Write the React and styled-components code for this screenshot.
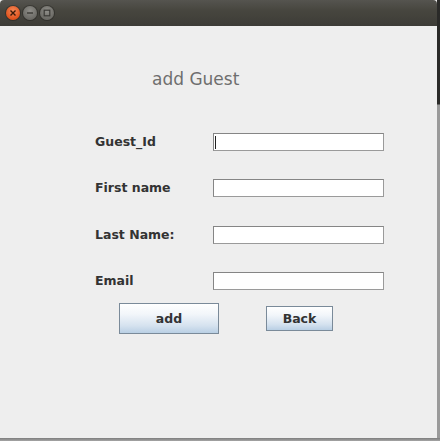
import React from "react";
import styled, { createGlobalStyle } from "styled-components";

const Global = createGlobalStyle`
  html, body { margin: 0; padding: 0; background: #8c8c8c; }
  body { width: 440px; height: 441px; overflow: hidden; font-family: "DejaVu Sans", sans-serif; }
`;

const Screen = styled.div`
  display: flex;
  flex-direction: column;
  width: 440px;
  height: 441px;
`;

const Top = styled.div`
  display: flex;
  height: 438px;
`;

const Edge = styled.div`
  width: 3px;
  background: linear-gradient(to bottom, #2a2a28 0, #2a2a28 104px, #9a9a9a 105px, #9a9a9a 100%);
`;

const Bottom = styled.div`
  height: 3px;
  background: linear-gradient(to bottom, #7d7d7d, #a5a5a5);
`;

const Window = styled.div`
  width: 437px;
  display: flex;
  flex-direction: column;
  background: #eeeeee;
`;

const TitleBar = styled.div`
  height: 26px;
  display: flex;
  align-items: center;
  gap: 3px;
  padding-left: 6px;
  background: linear-gradient(to bottom, #55544f 0, #47463f 40%, #3d3c37 100%);
  border-radius: 4px 4px 0 0;
`;

const Dot = styled.div`
  width: 14px;
  height: 14px;
  border-radius: 50%;
  display: flex;
  align-items: center;
  justify-content: center;
  background: ${(p) =>
    p.$close
      ? "radial-gradient(circle at 50% 35%, #f58a5a, #e0521c 70%)"
      : "radial-gradient(circle at 50% 35%, #8f8e89, #6b6a65 70%)"};
  box-shadow: 0 0 0 1px rgba(0,0,0,0.25);
`;

const Content = styled.div`
  flex: 1;
  display: flex;
  flex-direction: column;
  padding-top: 42px;
`;

const Heading = styled.div`
  margin-left: 152px;
  font-size: 17px;
  color: #6e6e6e;
  line-height: 22px;
`;

const Form = styled.div`
  display: grid;
  grid-template-columns: 118px 171px;
  grid-template-rows: 18px 18px 18px 18px;
  row-gap: 28.34px;
  margin: 43px 0 0 95px;
  align-items: center;
`;

const Label = styled.label`
  font-size: 12.5px;
  font-weight: bold;
  color: #333333;
  line-height: 18px;
`;

const Field = styled.div`
  position: relative;
  height: 18px;
  box-sizing: border-box;
  background: #ffffff;
  border: 1px solid #858585;
  border-right-color: #9a9a9a;
  border-bottom-color: #9a9a9a;
`;

const Caret = styled.div`
  position: absolute;
  left: 1px;
  top: 2px;
  width: 1px;
  height: 13px;
  background: #222;
`;

const Actions = styled.div`
  display: flex;
  align-items: center;
  gap: 47px;
  margin: 13px 0 0 119px;
`;

const Button = styled.button`
  width: ${(p) => p.$w}px;
  height: ${(p) => p.$h}px;
  padding: 0;
  box-sizing: border-box;
  border: 1px solid #7a8a99;
  background: linear-gradient(to bottom, #ffffff 0%, #f2f6fa 35%, #d5e2ef 75%, #b9cfe4 100%);
  font-family: "DejaVu Sans", sans-serif;
  font-size: 12.5px;
  font-weight: bold;
  color: #333333;
`;

export default function App() {
  return (
    <>
      <Global />
      <Screen>
        <Top>
          <Window>
            <TitleBar>
              <Dot $close>
                <svg width="8" height="8" viewBox="0 0 8 8">
                  <path d="M1.5 1.5 L6.5 6.5 M6.5 1.5 L1.5 6.5" stroke="#3a1a0a" strokeWidth="1.4" />
                </svg>
              </Dot>
              <Dot>
                <svg width="8" height="8" viewBox="0 0 8 8">
                  <path d="M1 4 H7" stroke="#3b3a36" strokeWidth="1.4" />
                </svg>
              </Dot>
              <Dot>
                <svg width="8" height="8" viewBox="0 0 8 8">
                  <rect x="1.2" y="1.2" width="5.6" height="5.6" fill="none" stroke="#3b3a36" strokeWidth="1.2" />
                </svg>
              </Dot>
            </TitleBar>
            <Content>
              <Heading>add Guest</Heading>
              <Form>
                <Label>Guest_Id</Label>
                <Field><Caret /></Field>
                <Label>First name</Label>
                <Field />
                <Label>Last Name:</Label>
                <Field />
                <Label>Email</Label>
                <Field />
              </Form>
              <Actions>
                <Button $w={100} $h={31}>add</Button>
                <Button $w={67} $h={25}>Back</Button>
              </Actions>
            </Content>
          </Window>
          <Edge />
        </Top>
        <Bottom />
      </Screen>
    </>
  );
}
